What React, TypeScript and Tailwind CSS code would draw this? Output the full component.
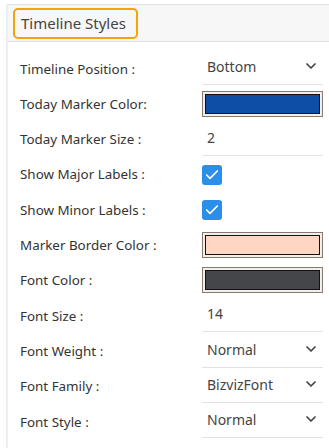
import { ChevronDown, Check } from "lucide-react";

type Row =
  | { label: string; kind: "select"; value: string }
  | { label: string; kind: "color"; color: string }
  | { label: string; kind: "text"; value: string }
  | { label: string; kind: "check" };

const rows: Row[] = [
  { label: "Timeline Position :", kind: "select", value: "Bottom" },
  { label: "Today Marker Color:", kind: "color", color: "#0f4ea6" },
  { label: "Today Marker Size :", kind: "text", value: "2" },
  { label: "Show Major Labels :", kind: "check" },
  { label: "Show Minor Labels :", kind: "check" },
  { label: "Marker Border Color :", kind: "color", color: "#ffd5c4" },
  { label: "Font Color :", kind: "color", color: "#45464a" },
  { label: "Font Size :", kind: "text", value: "14" },
  { label: "Font Weight :", kind: "select", value: "Normal" },
  { label: "Font Family :", kind: "select", value: "BizvizFont" },
  { label: "Font Style :", kind: "select", value: "Normal" },
];

const Control = ({ row }: { row: Row }) => {
  if (row.kind === "check")
    return (
      <div className="w-5 h-5 rounded-[3px] bg-[#2b8ee8] flex items-center justify-center">
        <Check className="w-4 h-4 text-white" strokeWidth={2.5} />
      </div>
    );
  if (row.kind === "color")
    return (
      <div className="w-[121px] h-[26px] border border-[#8a7868] bg-[#efefef] p-[2px]">
        <div className="w-full h-full border border-[#111]" style={{ backgroundColor: row.color }} />
      </div>
    );
  return (
    <div className="w-[121px] h-[33px] border-b border-[#e2e2e2] flex items-start justify-between pl-[5px] pr-[4px] pt-[4px] text-[14px] text-[#444]">
      <span>{row.value}</span>
      {row.kind === "select" && <ChevronDown className="w-[16px] h-[16px] mt-[2px] text-[#444]" strokeWidth={2.6} />}
    </div>
  );
};

export default function App() {
  return (
    <div className="w-[329px] h-[448px] bg-white overflow-hidden pt-[4px] pl-[6px]" style={{ fontFamily: "'Noto Sans', sans-serif" }}>
      <div className="h-full border-l-2 border-[#eceff1]">
        <div className="h-[38px] bg-[#f7f7f7] border-y border-[#dde3e6] flex items-center pl-[5px]">
          <div className="h-[31px] w-[125px] border-[2.5px] border-[#f2a40c] rounded-[5px] flex items-center pl-[6px] text-[15px] text-[#444]">
            Timeline Styles
          </div>
        </div>
        <div className="pt-[9px]">
          {rows.map((r) => (
            <div key={r.label} className="h-[35.3px] flex items-center">
              <div className="w-[194px] pl-[12px] text-[13.4px] text-[#333]">{r.label}</div>
              <Control row={r} />
            </div>
          ))}
        </div>
      </div>
    </div>
  );
}
